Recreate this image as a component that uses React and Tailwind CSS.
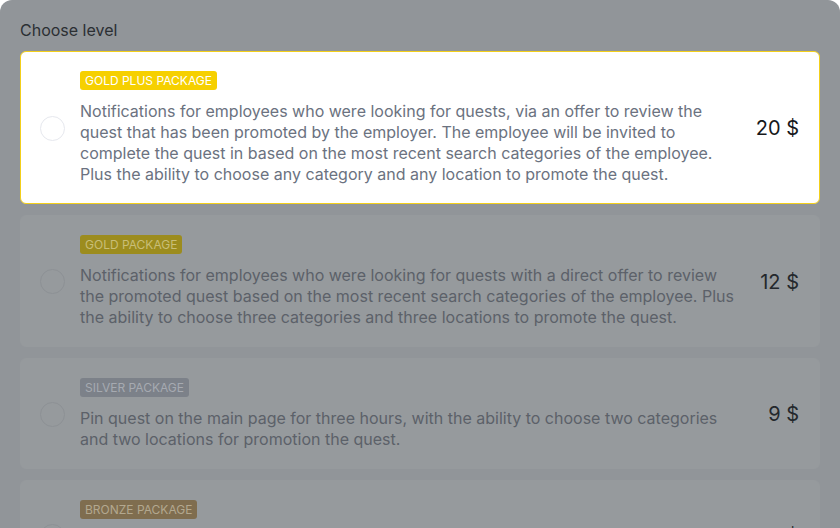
import React from "react";

const packages = [
  {
    name: "GOLD PLUS PACKAGE",
    text: "Notifications for employees who were looking for quests, via an offer to review the quest that has been promoted by the employer. The employee will be invited to complete the quest in based on the most recent search categories of the employee. Plus the ability to choose any category and any location to promote the quest.",
    price: "20 $",
    selected: true,
    badge: "bg-[#f6d000] text-white",
  },
  {
    name: "GOLD PACKAGE",
    text: "Notifications for employees who were looking for quests with a direct offer to review the promoted quest based on the most recent search categories of the employee. Plus the ability to choose three categories and three locations to promote the quest.",
    price: "12 $",
    badge: "bg-[#9c8c1e] text-[#c9be77]",
  },
  {
    name: "SILVER PACKAGE",
    text: "Pin quest on the main page for three hours, with the ability to choose two categories and two locations for promotion the quest.",
    price: "9 $",
    badge: "bg-[#7c8189] text-[#a6aab1]",
  },
  {
    name: "BRONZE PACKAGE",
    text: "Pin quest on the main page for one hour, with the ability to choose one category and one location for promotion the quest.",
    price: "5 $",
    badge: "bg-[#7f6d4f] text-[#b3a88f]",
  },
];

function Card({ p }) {
  const sel = p.selected;
  return (
    <div
      className={
        "flex items-center rounded-[6px] border pl-[19px] pr-[20px] pt-[19px] pb-[18px] " +
        (sel ? "bg-white border-[#f3cf1a]" : "bg-[#969a9d] border-[#969a9d]")
      }
    >
      <div
        className={
          "w-[25px] h-[25px] rounded-full border shrink-0 " +
          (sel ? "border-[#e6e8ee] bg-white" : "border-[#8d9195] bg-[#969a9d]")
        }
      />
      <div className="flex-1 ml-[15px] mr-[20px] flex flex-col items-start">
        <span
          className={
            "text-[12px] leading-[19px] px-[5px] rounded-[3px] " + p.badge
          }
        >
          {p.name}
        </span>
        <p
          className={
            "mt-[11px] text-[16px] leading-[21px] " +
            (sel ? "text-[#6b7280]" : "text-[#5c6169]")
          }
        >
          {p.text}
        </p>
      </div>
      <div
        className={
          "text-[20px] leading-[24px] whitespace-nowrap " +
          (sel ? "text-[#16181b]" : "text-[#24282c]")
        }
      >
        {p.price}
      </div>
    </div>
  );
}

export default function App() {
  return (
    <div
      className="w-[840px] h-[528px] bg-white overflow-hidden"
      style={{ fontFamily: "Inter, 'Noto Sans', sans-serif" }}
    >
      <div className="w-full h-[560px] bg-[#919599] rounded-[12px] px-[20px] pt-[20px]">
        <div className="text-[16px] leading-[21px] text-[#2b2f33] mb-[10px]">Choose level</div>
        <div className="flex flex-col gap-[11px]">
          {packages.map((p) => (
            <Card key={p.name} p={p} />
          ))}
        </div>
      </div>
    </div>
  );
}
